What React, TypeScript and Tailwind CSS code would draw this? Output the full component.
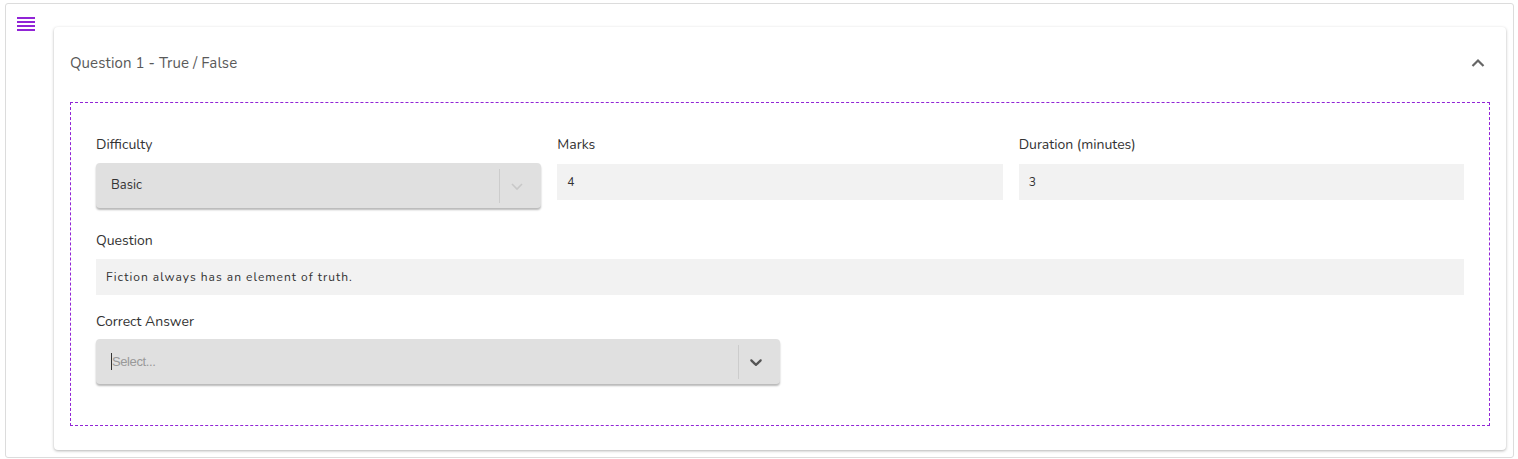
import { ReactNode } from 'react'

const Label = ({ children }: { children: ReactNode }) => (
    <label className="block h-5 text-[14px] leading-5 text-[#333]">{children}</label>
)

function SelectBox({ value, placeholder, muted }: { value?: string; placeholder?: string; muted?: boolean }) {
    return (
        <div className="flex h-[45px] items-center rounded-[4px] bg-[#e0e0e0] shadow-[0_2px_2px_rgba(0,0,0,0.28)]">
            <div className="flex flex-1 items-center pl-[15px]">
                {value ? (
                    <span className="text-[13px] text-[#333]">{value}</span>
                ) : (
                    <>
                        <span className="h-[17px] w-px bg-[#333]" />
                        <span className="font-['Liberation_Sans',sans-serif] text-[13px] tracking-[-0.4px] text-[#999]">
                            {placeholder}
                        </span>
                    </>
                )}
            </div>
            <span className="h-[34px] w-px bg-[#cccccc]" />
            <div className="ml-[7px] mr-[14px] flex h-5 w-5 items-center justify-center">
                {muted ? (
                    <svg width="14" height="14" viewBox="0 0 14 14">
                        <polyline points="2,5 7,10 12,5" fill="none" stroke="#c8c8c8" strokeWidth="1.6" />
                    </svg>
                ) : (
                    <svg width="20" height="20" viewBox="0 0 20 20" fill="#555">
                        <path d="M4.516 7.548c0.436-0.446 1.043-0.481 1.576 0l3.908 3.747 3.908-3.747c0.533-0.481 1.141-0.446 1.574 0 0.436 0.445 0.408 1.197 0 1.615-0.406 0.418-4.695 4.502-4.695 4.502-0.217 0.223-0.502 0.335-0.787 0.335s-0.57-0.112-0.789-0.335c0 0-4.287-4.084-4.695-4.502s-0.436-1.17 0-1.615z" />
                    </svg>
                )}
            </div>
        </div>
    )
}

const TextBox = ({ children, spaced }: { children: ReactNode; spaced?: boolean }) => (
    <div
        className={`flex h-9 items-center bg-[#f2f2f2] px-[10px] text-[#333] ${spaced ? 'text-[12px] tracking-[1px]' : 'text-[12px]'}`}
    >
        {children}
    </div>
)

export default function App() {
    return (
        <div className="bg-white pl-[5px] pr-[4px] pt-[3px] font-['Nunito','Lato',sans-serif]">
            <div className="flex h-[455px] rounded-[3px] border border-[#dcdcdc] pl-[11px] pr-[7px] pt-[13px]">
                <div className="w-[37px] shrink-0">
                    <div className="flex w-[18px] flex-col gap-[2px]">
                        <span className="h-[2px] bg-[#9124d6]" />
                        <span className="h-[2px] bg-[#9124d6]" />
                        <span className="h-[2px] bg-[#9124d6]" />
                        <span className="h-[2px] bg-[#9124d6]" />
                    </div>
                </div>

                <div className="mt-[10px] h-[423px] flex-1 rounded-[4px] bg-white px-4 pt-4 shadow-[0_1px_3px_rgba(0,0,0,0.3)]">
                    <div className="flex h-[40px] items-center justify-between pr-[3px]">
                        <span className="text-[15px] tracking-[0.1px] text-[#595959]">Question 1 - True / False</span>
                        <svg width="14" height="10" viewBox="0 0 14 10" className="mr-[2px]">
                            <polyline points="1.5,8 7,2.5 12.5,8" fill="none" stroke="#666" strokeWidth="2.2" />
                        </svg>
                    </div>

                    <div className="mt-[19px] h-[324px] border border-dashed border-[#9124d6] px-[25px] pt-[32px]">
                        <div className="grid grid-cols-3 gap-x-4">
                            <div>
                                <Label>Difficulty</Label>
                                <div className="mt-[8px]">
                                    <SelectBox value="Basic" muted />
                                </div>
                            </div>
                            <div>
                                <Label>Marks</Label>
                                <div className="mt-[9px]">
                                    <TextBox>4</TextBox>
                                </div>
                            </div>
                            <div>
                                <Label>Duration (minutes)</Label>
                                <div className="mt-[9px]">
                                    <TextBox>3</TextBox>
                                </div>
                            </div>
                        </div>

                        <div className="mt-[23px]">
                            <Label>Question</Label>
                            <div className="mt-[8px]">
                                <TextBox spaced>Fiction always has an element of truth.</TextBox>
                            </div>
                        </div>

                        <div className="mt-[17px] w-1/2">
                            <Label>Correct Answer</Label>
                            <div className="mt-[7px]">
                                <SelectBox placeholder="Select..." />
                            </div>
                        </div>
                    </div>
                </div>
            </div>
        </div>
    )
}
